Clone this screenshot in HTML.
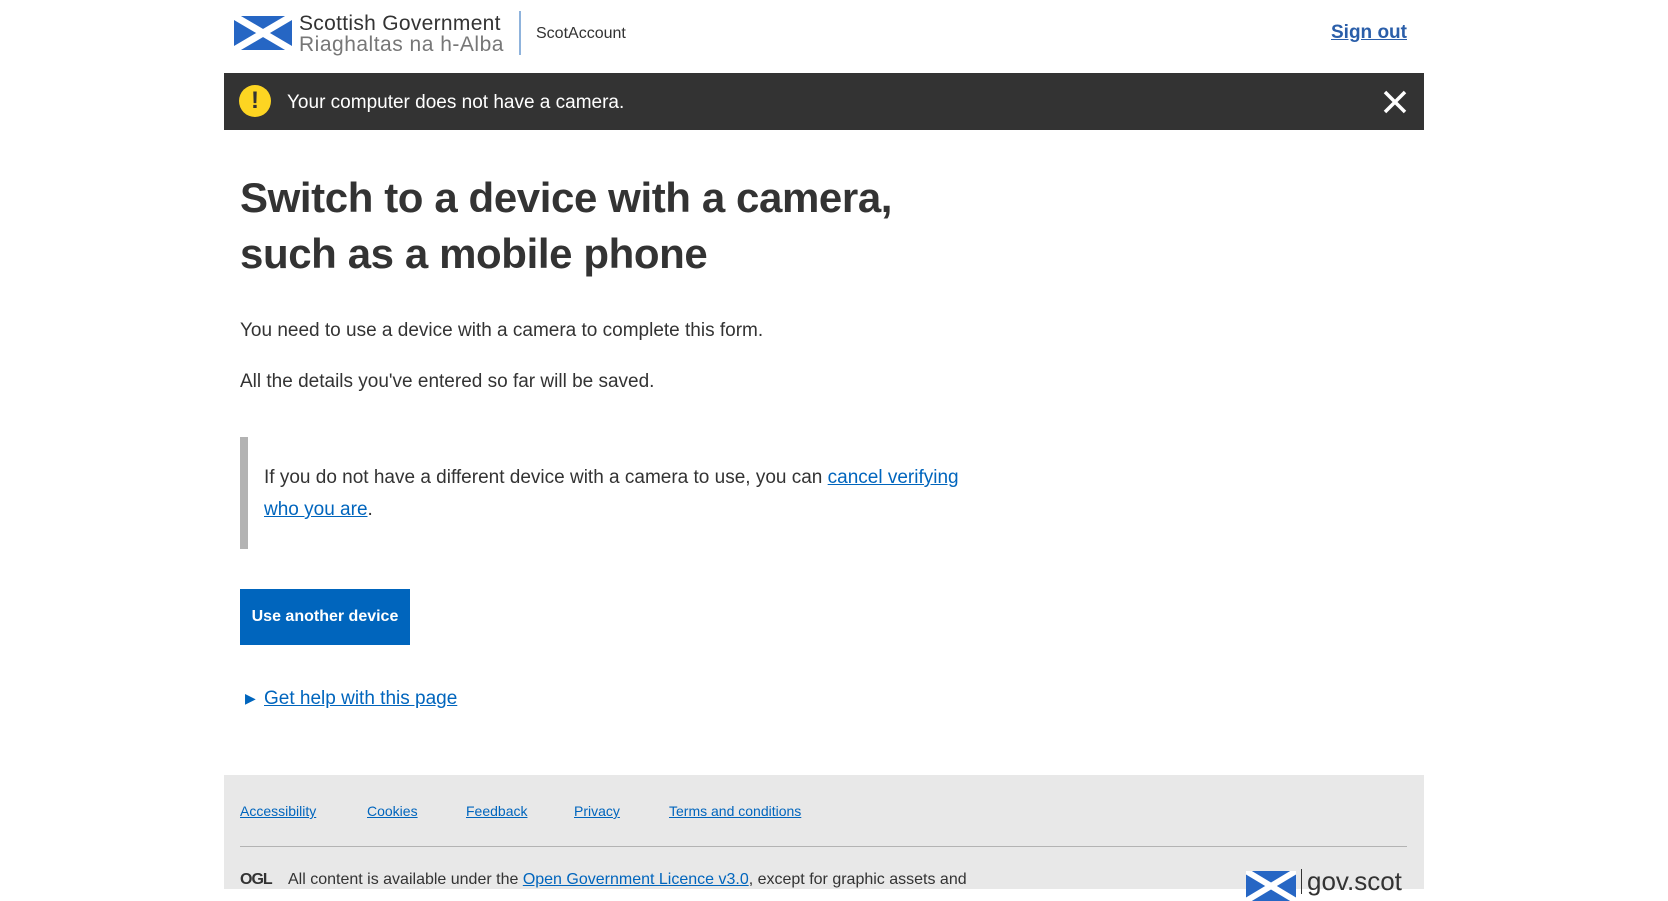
<!DOCTYPE html>
<html><head><meta charset="utf-8"><style>
*{box-sizing:border-box;margin:0;padding:0}
body{width:1668px;height:889px;overflow:hidden;background:#fff;font-family:"Liberation Sans",Arial,sans-serif;color:#333;position:relative}
.a{position:absolute;white-space:nowrap}
a{color:#0065bd;text-decoration:underline}
</style></head><body>
<svg class="a" style="left:234px;top:16px" width="58" height="34" viewBox="0 0 58 34"><rect width="58" height="34" fill="#2666c4"/><path d="M0 0L58 34M58 0L0 34" stroke="#fff" stroke-width="7"/></svg>
<div class="a" style="left:299px;top:12px;font-size:21px;line-height:24px;color:#333;letter-spacing:0.3px">Scottish Government</div>
<div class="a" style="left:299px;top:33px;font-size:21px;line-height:24px;color:#777;letter-spacing:0.5px">Riaghaltas na h-Alba</div>
<div class="a" style="left:519px;top:11px;width:2px;height:44px;background:#8fb3dc"></div>
<div class="a" style="left:536px;top:25px;font-size:16px;color:#333">ScotAccount</div>
<a class="a" style="left:1331px;top:22px;font-size:19px;font-weight:bold;color:#2a5ea9">Sign out</a>
<div class="a" style="left:224px;top:73px;width:1200px;height:57px;background:#333"></div>
<div class="a" style="left:239px;top:85px;width:32px;height:32px;border-radius:50%;background:#fdd522;color:#333;font-weight:bold;font-size:24px;text-align:center;line-height:32px">!</div>
<div class="a" style="left:287px;top:92px;font-size:19px;color:#fff">Your computer does not have a camera.</div>
<svg class="a" style="left:1383px;top:90px" width="24" height="24"><path d="M2 2L22 22M22 2L2 22" stroke="#fff" stroke-width="3.5"/></svg>
<div class="a" style="left:240px;top:170px;font-size:42px;line-height:56px;font-weight:bold;color:#333;letter-spacing:-0.4px">Switch to a device with a camera,<br>such as a mobile phone</div>
<div class="a" style="left:240px;top:320px;font-size:19px">You need to use a device with a camera to complete this form.</div>
<div class="a" style="left:240px;top:371px;font-size:19px">All the details you've entered so far will be saved.</div>
<div class="a" style="left:240px;top:437px;width:8px;height:112px;background:#b3b3b3"></div>
<div class="a" style="left:264px;top:462px;font-size:19px;line-height:32px">If you do not have a different device with a camera to use, you can <a>cancel verifying</a><br><a>who you are</a>.</div>
<div class="a" style="left:240px;top:589px;width:170px;height:56px;background:#0065bd;color:#fff;font-weight:bold;font-size:16px;text-align:center;line-height:56px">Use another device</div>
<div class="a" style="left:245px;top:690px;font-size:14px;color:#0065bd">&#9654;</div>
<a class="a" style="left:264px;top:688px;font-size:19px">Get help with this page</a>
<div class="a" style="left:224px;top:775px;width:1200px;height:114px;background:#e8e8e8"></div>
<a class="a" style="left:240px;top:803px;font-size:14px">Accessibility</a>
<a class="a" style="left:367px;top:803px;font-size:14px">Cookies</a>
<a class="a" style="left:466px;top:803px;font-size:14px">Feedback</a>
<a class="a" style="left:574px;top:803px;font-size:14px">Privacy</a>
<a class="a" style="left:669px;top:803px;font-size:14px">Terms and conditions</a>
<div class="a" style="left:240px;top:846px;width:1167px;height:1px;background:#b3b3b3"></div>
<div class="a" style="left:240px;top:871px;font-size:16px;font-weight:bold;letter-spacing:-1px">OGL</div>
<div class="a" style="left:288px;top:871px;font-size:16px">All content is available under the <a>Open Government Licence v3.0</a>, except for graphic assets and</div>
<svg class="a" style="left:1246px;top:871px" width="50" height="30"><rect width="50" height="30" fill="#2666c4"/><path d="M0 0L50 30M50 0L0 30" stroke="#fff" stroke-width="6"/></svg>
<div class="a" style="left:1301px;top:869px;width:1px;height:25px;background:#333"></div>
<div class="a" style="left:1307px;top:866px;font-size:26px;color:#333">gov.scot</div>
</body></html>
